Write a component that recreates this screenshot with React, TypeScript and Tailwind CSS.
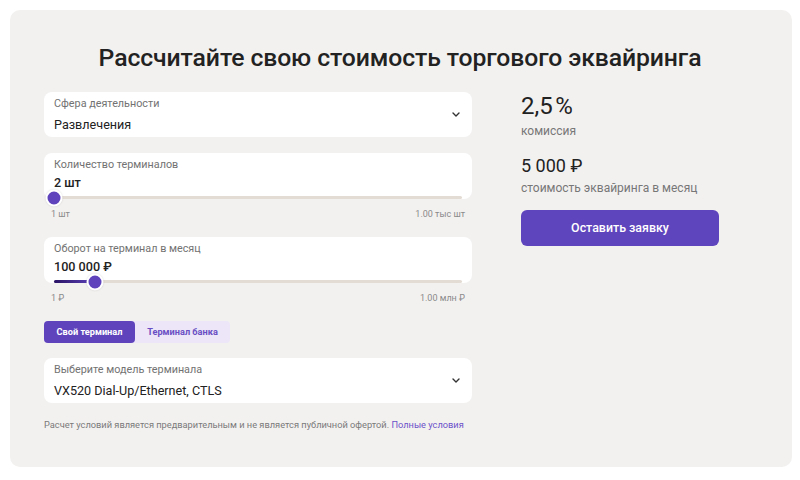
import React from "react";

const font = { fontFamily: "Roboto, 'Noto Sans', sans-serif" };

function Chevron() {
  return (
    <svg width="8" height="5" viewBox="0 0 8 5" className="shrink-0">
      <polyline points="1,1 4,4 7,1" fill="none" stroke="#333" strokeWidth="1.4" strokeLinecap="round" strokeLinejoin="round" />
    </svg>
  );
}

function SelectCard({ label, value }: { label: string; value: string }) {
  return (
    <div className="bg-white rounded-[8px] h-[45px] pl-[10px] pr-[12px] flex items-center justify-between">
      <div className="flex flex-col">
        <div className="text-[10.8px] leading-[16px] text-[#727272] mt-[1px]">{label}</div>
        <div className="text-[12.6px] leading-[20px] text-[#222] mt-[3px]">{value}</div>
      </div>
      <Chevron />
    </div>
  );
}

function SliderCard({ label, value, pct, min, max }: { label: string; value: string; pct: number; min: string; max: string }) {
  return (
    <div>
      <div className="bg-white rounded-[8px] h-[46px] px-[10px] pt-[4px] flex flex-col">
        <div className="text-[10.8px] leading-[16px] text-[#727272]">{label}</div>
        <div className="text-[12.6px] leading-[20px] text-[#222] font-medium">{value}</div>
        <div className="relative h-[3px] mt-[3px] rounded-full bg-[#e3dcd5]">
          <div
            className="absolute left-0 top-0 h-[3px] rounded-full bg-gradient-to-r from-[#2a1466] to-[#5f43bc]"
            style={{ width: `${pct}%` }}
          />
          <div
            className="absolute top-1/2 w-[17px] h-[17px] -translate-x-1/2 -translate-y-1/2 rounded-full bg-[#5f43bc] border-2 border-white shadow-[0_0_2px_rgba(0,0,0,0.15)]"
            style={{ left: `${pct}%` }}
          />
        </div>
      </div>
      <div className="flex justify-between mt-[8px] px-[7px] text-[9px] leading-[14px] text-[#8a8a8a]">
        <span>{min}</span>
        <span>{max}</span>
      </div>
    </div>
  );
}

export default function App() {
  return (
    <div className="w-[800px] h-[480px] bg-white pt-[10px] pl-[10px]" style={font}>
      <div className="w-[782px] h-[457px] bg-[#f3f1f0] rounded-[10px] pt-[33px] pl-[34px] pr-[34px]">
        <h1 className="text-center text-[24.75px] leading-[30px] font-medium text-[#222] -ml-[2px] tracking-[-0.1px]">
          Рассчитайте свою стоимость торгового эквайринга
        </h1>
        <div className="flex mt-[19px]">
          <div className="w-[428px] flex flex-col">
            <SelectCard label="Сфера деятельности" value="Развлечения" />
            <div className="mt-[16px]">
              <SliderCard label="Количество терминалов" value="2 шт" pct={0.1} min="1 шт" max="1.00 тыс шт" />
            </div>
            <div className="mt-[16px]">
              <SliderCard label="Оборот на терминал в месяц" value="100 000 ₽" pct={10} min="1 ₽" max="1.00 млн ₽" />
            </div>
            <div className="mt-[16px] flex">
              <div className="flex bg-[#ece6f8] rounded-[4px] h-[22px]">
                <div className="w-[91px] flex items-center justify-center bg-[#5f43bc] rounded-[4px] text-white text-[9.2px] font-bold">
                  Свой терминал
                </div>
                <div className="w-[95px] flex items-center justify-center text-[#6a4fc4] text-[9.2px] font-bold">
                  Терминал банка
                </div>
              </div>
            </div>
            <div className="mt-[15px]">
              <SelectCard label="Выберите модель терминала" value="VX520 Dial-Up/Ethernet, CTLS" />
            </div>
            <div className="mt-[15px] text-[9.25px] leading-[14px] text-[#7a7a7a] whitespace-nowrap">
              Расчет условий является предварительным и не является публичной офертой.{" "}
              <span className="text-[#6b52c9]">Полные условия</span>
            </div>
          </div>
          <div className="ml-[49px] flex flex-col">
            <div className="text-[24px] leading-[28px] text-[#222] mt-[0px]">2,5&#8202;%</div>
            <div className="text-[12px] leading-[16px] text-[#777] mt-[3px]">комиссия</div>
            <div className="text-[18px] leading-[24px] text-[#222] mt-[15px]">5 000 ₽</div>
            <div className="text-[12px] leading-[16px] text-[#777] mt-[2px]">стоимость эквайринга в месяц</div>
            <button className="mt-[14px] w-[198px] h-[36px] rounded-[6px] bg-[#5f45bd] text-white text-[12.4px] font-medium">
              Оставить заявку
            </button>
          </div>
        </div>
      </div>
    </div>
  );
}
